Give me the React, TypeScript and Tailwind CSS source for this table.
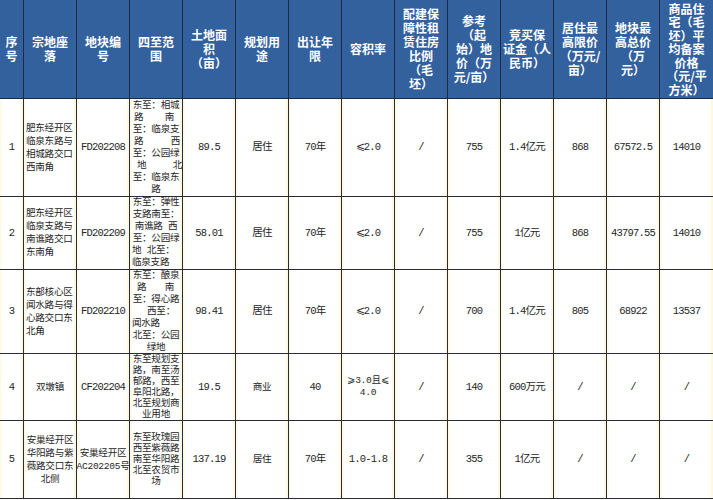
import React from "react";

const headers: string[][] = [
  ["序", "号"],
  ["宗地座", "落"],
  ["地块编", "号"],
  ["四至范", "围"],
  ["土地面", "积", "（亩）"],
  ["规划用", "途"],
  ["出让年", "限"],
  ["容积率"],
  ["配建保", "障性租", "赁住房", "比例", "（毛", "坯）"],
  ["参考", "（起", "始）地", "价（万", "元/亩）"],
  ["竞买保", "证金（人", "民币）"],
  ["居住最", "高限价", "（万元/", "亩）"],
  ["地块最", "高总价", "（万", "元）"],
  ["商品住", "宅（毛", "坯）平", "均备案", "价格", "（元/平", "方米）"],
];

const rowHeights = ["h-[98px]", "h-[73px]", "h-[84px]", "h-[67px]", "h-[78px]"];

function Lines({ lines, align = "center", leading = "leading-[13px]" }: { lines: string[]; align?: "center" | "left"; leading?: string }) {
  return (
    <div className={`w-full flex flex-col ${leading} ${align === "left" ? "items-start pl-[2px]" : "items-center"}`}>
      {lines.map((l, i) => (
        <div key={i} className="whitespace-pre">{l}</div>
      ))}
    </div>
  );
}

function Spread({ a, b, cls }: { a: string; b: string; cls: string }) {
  return (
    <div className={`flex w-full justify-between ${cls}`}>
      <span>{a}</span>
      <span>{b}</span>
    </div>
  );
}

const sizhi: React.ReactNode[] = [
  <div className="w-full flex flex-col leading-[12px] text-center">
    <div>东至：相城</div>
    <Spread a="路" b="南" cls="pl-[4px] pr-[8px]" />
    <div>至：临泉支</div>
    <Spread a="路" b="西" cls="pl-[4px] pr-[2px]" />
    <div>至：公园绿</div>
    <Spread a="地" b="北" cls="pl-[7px] pr-[0px]" />
    <div>至：临泉东</div>
    <div>路</div>
  </div>,
  <div className="w-full flex flex-col leading-[12px] text-center">
    <div>东至：弹性</div>
    <div>支路南至：</div>
    <div className="whitespace-pre">南谯路 西</div>
    <div>至：公园绿</div>
    <div className="text-left pl-[2px] whitespace-pre">地 北至：</div>
    <div className="text-left pl-[2px]">临泉支路</div>
  </div>,
  <div className="w-full flex flex-col leading-[12px] text-center">
    <div>东至：酿泉</div>
    <Spread a="路" b="南" cls="pl-[7px] pr-[8px]" />
    <div>至：得心路</div>
    <div className="pl-[10px]">西至：</div>
    <div className="text-left pl-[2px]">闻水路</div>
    <div>北至：公园</div>
    <div>绿地</div>
  </div>,
  <Lines lines={["东至规划支", "路，南至汤", "郁路，西至", "阜阳北路，", "北至规划商", "业用地"]} leading="leading-[11px]" />,
  <Lines lines={["东至玫瑰园", "西至紫薇路", "南至华阳路", "北至农贸市", "场"]} leading="leading-[11px]" />,
];

const rows: React.ReactNode[][] = [
  [
    "1",
    <Lines lines={["肥东经开区", "临泉东路与", "相城路交口", "西南角"]} align="left" />,
    "FD202208",
    sizhi[0],
    "89.5",
    "居住",
    "70年",
    "⩽2.0",
    "/",
    "755",
    "1.4亿元",
    "868",
    "67572.5",
    "14010",
  ],
  [
    "2",
    <Lines lines={["肥东经开区", "临泉支路与", "南谯路交口", "东南角"]} align="left" />,
    "FD202209",
    sizhi[1],
    "58.01",
    "居住",
    "70年",
    "⩽2.0",
    "/",
    "755",
    "1亿元",
    "868",
    "43797.55",
    "14010",
  ],
  [
    "3",
    <Lines lines={["东部核心区", "闻水路与得", "心路交口东", "北角"]} align="left" />,
    "FD202210",
    sizhi[2],
    "98.41",
    "居住",
    "70年",
    "⩽2.0",
    "/",
    "700",
    "1.4亿元",
    "805",
    "68922",
    "13537",
  ],
  [
    "4",
    <span className="whitespace-nowrap">双墩镇</span>,
    "CF202204",
    sizhi[3],
    "19.5",
    <span className="whitespace-nowrap">商业</span>,
    "40",
    <Lines lines={["⩾3.0且⩽", "4.0"]} leading="leading-[12px]" />,
    "/",
    "140",
    "600万元",
    "/",
    "/",
    "/",
  ],
  [
    "5",
    <Lines lines={["安巢经开区", "华阳路与紫", "薇路交口东", "北侧"]} />,
    <Lines lines={["安巢经开区", "AC202205号"]} />,
    sizhi[4],
    "137.19",
    <span className="whitespace-nowrap">居住</span>,
    "70年",
    "1.0-1.8",
    "/",
    "355",
    "1亿元",
    "/",
    "/",
    "/",
  ],
];

export default function App() {
  return (
    <div className="w-[713px] h-[500px] bg-white overflow-hidden">
      <div className="grid grid-cols-[24px_repeat(12,53px)_53px]">
        {headers.map((h, i) => (
          <div
            key={`h${i}`}
            className={`h-[99px] bg-[#33619e] text-white font-bold text-[12px] ${i === 13 ? "leading-[13.4px]" : "leading-[14px]"} font-['Noto_Sans_CJK_SC',sans-serif] flex items-center justify-center text-center border-b border-[#1d2a45] ${i < 13 ? "border-r" : ""}`}
          >
            <div className="flex flex-col items-center">
              {h.map((l, j) => (
                <div key={j} className="whitespace-nowrap">{l}</div>
              ))}
            </div>
          </div>
        ))}
        {rows.map((r, ri) =>
          r.map((c, ci) => (
            <div
              key={`r${ri}c${ci}`}
              className={`${rowHeights[ri]} overflow-hidden flex items-center justify-center text-center text-[9.6px] leading-[13px] text-[#262626] font-['Liberation_Mono','Noto_Sans_CJK_SC',monospace] tracking-[-0.3px] border-b border-[#2a2a3c] ${ci < 13 ? "border-r" : ""} shadow-[inset_-2px_0_0_#fcf9dc,inset_2px_0_0_#fdfbea]`}
            >
              {typeof c === "string" ? (
                <span className="whitespace-nowrap text-[10.5px] tracking-[-0.8px]">{c}</span>
              ) : (
                c
              )}
            </div>
          ))
        )}
      </div>
    </div>
  );
}
